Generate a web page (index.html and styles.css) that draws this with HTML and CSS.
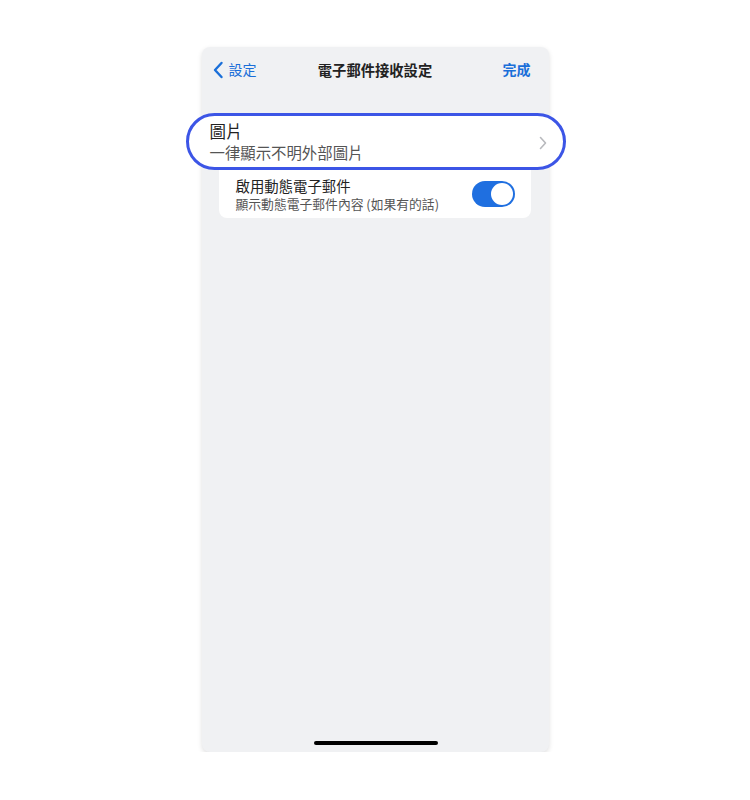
FILE: index.html
```html
<!DOCTYPE html>
<html lang="zh-Hant">
<head>
<meta charset="utf-8">
<link rel="stylesheet" href="styles.css">
</head>
<body>
<div class="phone">
  <div class="nav">
    <div class="back">
      <svg class="back-icon" width="12" height="18" viewBox="0 0 12 18"><path d="M9.5 2 L3 9 L9.5 16" fill="none" stroke="#1a6fd9" stroke-width="2.4" stroke-linecap="round" stroke-linejoin="round"/></svg>
      <span>設定</span>
    </div>
    <div class="title">電子郵件接收設定</div>
    <div class="done">完成</div>
  </div>
  <div class="content">
    <div class="pill">
      <div class="pill-text">
        <div class="pill-title">圖片</div>
        <div class="pill-sub">一律顯示不明外部圖片</div>
      </div>
      <svg class="chev" width="8" height="14" viewBox="0 0 8 14"><path d="M1.5 1.5 L6.5 7 L1.5 12.5" fill="none" stroke="#b8b9bd" stroke-width="1.6" stroke-linecap="round" stroke-linejoin="round"/></svg>
    </div>
    <div class="card">
      <div class="row">
        <div class="row-text">
          <div class="row-title">啟用動態電子郵件</div>
          <div class="row-sub">顯示動態電子郵件內容 (如果有的話)</div>
        </div>
        <div class="toggle"><div class="knob"></div></div>
      </div>
    </div>
  </div>
  <div class="home"></div>
</div>
</body>
</html>
```
FILE: styles.css
```css
* { box-sizing: border-box; }
html, body { margin: 0; padding: 0; background: #ffffff; }
body {
  font-family: "Noto Sans CJK TC", "Noto Sans", sans-serif;
  padding-top: 47px;
}
.phone {
  width: 347px;
  height: 705px;
  margin: 0 auto;
  background: #f0f1f3;
  border-radius: 8px;
  box-shadow: 0 2px 5px rgba(0,0,0,0.13);
  display: flex;
  flex-direction: column;
  position: relative;
}
.nav {
  height: 44px;
  display: flex;
  align-items: center;
  justify-content: space-between;
  padding: 0 18px 0 10px;
  position: relative;
}
.back {
  display: flex;
  align-items: center;
  gap: 5px;
  color: #1a6fd9;
  font-size: 14px;
}
.back-icon { display: block; margin-top: 1px; }
.title {
  position: absolute;
  left: 0; right: 0;
  text-align: center;
  font-size: 14.3px;
  font-weight: 700;
  color: #222;
  pointer-events: none;
}
.done {
  color: #1a6fd9;
  font-size: 14px;
  font-weight: 700;
}
.content {
  flex: 1;
  padding: 22px 17px 0 17px;
}
.pill {
  position: relative;
  z-index: 2;
  margin: 0 -34px 0 -33px;
  height: 57px;
  background: #fff;
  border: 3px solid #3c55e6;
  border-radius: 29px;
  display: flex;
  align-items: center;
  justify-content: space-between;
  padding: 0 16px 0 21px;
}
.pill-title {
  font-size: 16.5px;
  color: #222;
  line-height: 20px;
}
.pill-sub {
  font-size: 15.4px;
  color: #555;
  line-height: 20px;
  margin-top: 1px;
}
.chev { display: block; margin-top: 2px; }
.card {
  background: #fff;
  border-radius: 8px;
  margin-top: -10px;
  padding-top: 10px;
  margin-right: 1px;
}
.row {
  height: 48px;
  display: flex;
  align-items: center;
  justify-content: space-between;
  padding: 0 16px 0 17px;
}
.row-title {
  font-size: 14.4px;
  color: #222;
  line-height: 19px;
}
.row-sub {
  font-size: 12.8px;
  color: #555;
  line-height: 17px;
}
.toggle {
  width: 43px;
  height: 26px;
  border-radius: 13px;
  background: #1f6fe0;
  position: relative;
}
.knob {
  position: absolute;
  right: 2px;
  top: 2px;
  width: 22px;
  height: 22px;
  border-radius: 50%;
  background: #fff;
}
.home {
  position: absolute;
  left: 112px;
  bottom: 7px;
  width: 124px;
  height: 4px;
  border-radius: 2px;
  background: #000;
}
```
